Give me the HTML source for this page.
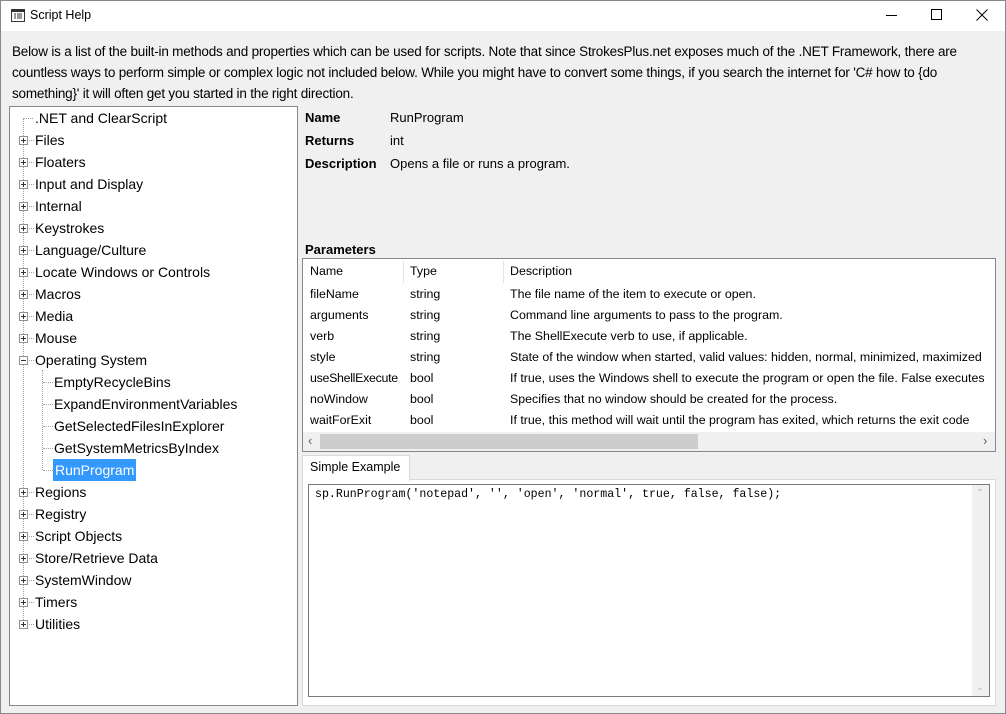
<!DOCTYPE html>
<html><head><style>
*{margin:0;padding:0;box-sizing:border-box}
body{width:1006px;height:714px;background:#f0f0f0;font-family:"Liberation Sans",sans-serif;position:relative;overflow:hidden;color:#000}
.frame{position:absolute;left:0;top:0;width:1006px;height:714px;border:1px solid #888;pointer-events:none}
.abs{position:absolute}
.title{left:0;top:0;width:1006px;height:31px;background:#fff}
.intro{left:12px;top:41px;width:985px;font-size:13.5px;line-height:21px;letter-spacing:-0.2px}
.tree{left:9px;top:106px;width:289px;height:600px;background:#fff;border:1px solid #828790}
.ti{position:absolute;font-size:14px;white-space:nowrap;height:22px;line-height:22px}
.exp{position:absolute;width:9px;height:9px;border:1px solid #919191;background:#fff}
.exp:before{content:"";position:absolute;left:1px;top:3px;width:5px;height:1px;background:#333}
.exp.p:after{content:"";position:absolute;left:3px;top:1px;width:1px;height:5px;background:#333}
.hl{position:absolute;border-top:1px dotted #a0a0a0;height:0}
.vl{position:absolute;border-left:1px dotted #a0a0a0;width:0}
.lbl{font-size:13px;position:absolute}
.b{font-weight:bold}
.tbl{left:302px;top:258px;width:694px;height:194px;background:#fff;border:1px solid #828790;overflow:hidden}
.c{position:absolute;font-size:12.4px;white-space:nowrap}
</style></head><body>
<div class="abs title">
 <svg class="abs" style="left:11px;top:9px" width="14" height="13" viewBox="0 0 14 13"><rect x="0.5" y="0.5" width="13" height="12" fill="#fff" stroke="#333"/><rect x="1" y="1" width="12" height="2" fill="#333"/><path d="M3 5h2M3 7h2M3 9h2M6 5h5M6 7h5M6 9h5" stroke="#333"/></svg>
 <div class="abs" style="left:30px;top:8px;font-size:12.5px">Script Help</div>
 <div class="abs" style="left:886px;top:15px;width:11px;height:1px;background:#000"></div>
 <div class="abs" style="left:931px;top:9px;width:11px;height:11px;border:1px solid #000"></div>
 <svg class="abs" style="left:976px;top:9px" width="12" height="12"><path d="M0.5 0.5L11.5 11.5M11.5 0.5L0.5 11.5" stroke="#000"/></svg>
</div>
<div class="abs intro">Below is a list of the built-in methods and properties which can be used for scripts. Note that since StrokesPlus.net exposes much of the .NET Framework, there are<br>countless ways to perform simple or complex logic not included below. While you might have to convert some things, if you search the internet for 'C# how to {do<br>something}' it will often get you started in the right direction.</div>
<div class="abs tree">
 <div class="vl" style="left:13px;top:11px;height:506px"></div>
 <div class="vl" style="left:32px;top:263px;height:100px"></div>
 <div class="hl" style="left:13px;top:11px;width:10px"></div>
 <div class="ti" style="left:25px;top:0px">.NET and ClearScript</div>
 <div id="items"></div>
 <div class="hl" style="left:33px;top:275px;width:10px"></div><div class="ti" style="left:44px;top:264px">EmptyRecycleBins</div>
 <div class="hl" style="left:33px;top:297px;width:10px"></div><div class="ti" style="left:44px;top:286px">ExpandEnvironmentVariables</div>
 <div class="hl" style="left:33px;top:319px;width:10px"></div><div class="ti" style="left:44px;top:308px">GetSelectedFilesInExplorer</div>
 <div class="hl" style="left:33px;top:341px;width:10px"></div><div class="ti" style="left:44px;top:330px">GetSystemMetricsByIndex</div>
 <div class="hl" style="left:33px;top:363px;width:10px"></div><div class="ti" style="left:43px;top:352px;background:#3399ff;color:#fff;padding:0 2px">RunProgram</div>
</div>
<div class="abs lbl b" style="left:305px;top:110px">Name</div><div class="abs lbl" style="left:390px;top:110px">RunProgram</div>
<div class="abs lbl b" style="left:305px;top:133px">Returns</div><div class="abs lbl" style="left:390px;top:133px">int</div>
<div class="abs lbl b" style="left:305px;top:156px">Description</div><div class="abs lbl" style="left:390px;top:156px">Opens a file or runs a program.</div>
<div class="abs lbl b" style="left:305px;top:242px">Parameters</div>
<div class="abs tbl">
 <div class="abs" style="left:100px;top:2px;width:1px;height:22px;background:#e5e5e5"></div>
 <div class="abs" style="left:200px;top:2px;width:1px;height:22px;background:#e5e5e5"></div>
 <div class="c" style="left:7px;top:5px">Name</div><div class="c" style="left:107px;top:5px">Type</div><div class="c" style="left:207px;top:5px">Description</div>
 <div class="c" style="left:7px;top:28px">fileName</div><div class="c" style="left:107px;top:28px">string</div><div class="c" style="left:207px;top:28px">The file name of the item to execute or open.</div>
 <div class="c" style="left:7px;top:49px">arguments</div><div class="c" style="left:107px;top:49px">string</div><div class="c" style="left:207px;top:49px">Command line arguments to pass to the program.</div>
 <div class="c" style="left:7px;top:70px">verb</div><div class="c" style="left:107px;top:70px">string</div><div class="c" style="left:207px;top:70px">The ShellExecute verb to use, if applicable.</div>
 <div class="c" style="left:7px;top:91px">style</div><div class="c" style="left:107px;top:91px">string</div><div class="c" style="left:207px;top:91px">State of the window when started, valid values: hidden, normal, minimized, maximized</div>
 <div class="c" style="left:7px;top:112px;letter-spacing:-0.3px">useShellExecute</div><div class="c" style="left:107px;top:112px">bool</div><div class="c" style="left:207px;top:112px">If true, uses the Windows shell to execute the program or open the file. False executes</div>
 <div class="c" style="left:7px;top:133px">noWindow</div><div class="c" style="left:107px;top:133px">bool</div><div class="c" style="left:207px;top:133px">Specifies that no window should be created for the process.</div>
 <div class="c" style="left:7px;top:154px">waitForExit</div><div class="c" style="left:107px;top:154px">bool</div><div class="c" style="left:207px;top:154px">If true, this method will wait until the program has exited, which returns the exit code</div>
 <div class="abs" style="left:0;top:173px;width:692px;height:19px;background:#f0f0f0"></div>
 <div class="abs" style="left:17px;top:175px;width:378px;height:15px;background:#cdcdcd"></div>
 <div class="abs" style="left:5px;top:174px;font-size:13px;color:#606060">&#8249;</div>
 <div class="abs" style="left:680px;top:174px;font-size:13px;color:#606060">&#8250;</div>
</div>
<div class="abs" style="left:302px;top:479px;width:694px;height:227px;background:#fff;border:1px solid #d9d9d9"></div>
<div class="abs" style="left:302px;top:455px;width:108px;height:26px;background:#fff;border:1px solid #d9d9d9;border-bottom:none;font-size:12.5px;padding:4px 0 0 7px">Simple Example</div>
<div class="abs" style="left:308px;top:484px;width:682px;height:213px;background:#fff;border:1px solid #7a7a7a">
 <div class="abs" style="left:6px;top:3px;font-family:'Liberation Mono',monospace;font-size:11.6px">sp.RunProgram('notepad', '', 'open', 'normal', true, false, false);</div>
 <div class="abs" style="right:0;top:0;width:17px;height:211px;background:#f0f0f0"></div>
 <div class="abs" style="right:5px;top:3px;font-size:10px;color:#bbb">&#8963;</div>
 <div class="abs" style="right:5px;bottom:3px;font-size:10px;color:#bbb">&#8964;</div>
</div>
<div class="frame"></div>
<script>
var it=["Files","Floaters","Input and Display","Internal","Keystrokes","Language/Culture","Locate Windows or Controls","Macros","Media","Mouse","Operating System",null,null,null,null,null,"Regions","Registry","Script Objects","Store/Retrieve Data","SystemWindow","Timers","Utilities"];
var h="";
for(var i=0;i<it.length;i++){if(!it[i])continue;var y=33+22*i;
h+='<div class="exp'+(it[i]=="Operating System"?'':' p')+'" style="left:9px;top:'+(y-4)+'px"></div>';
h+='<div class="hl" style="left:19px;top:'+y+'px;width:5px"></div>';
h+='<div class="ti" style="left:25px;top:'+(y-11)+'px">'+it[i]+'</div>';}
document.getElementById("items").innerHTML=h;
</script>
</body></html>
